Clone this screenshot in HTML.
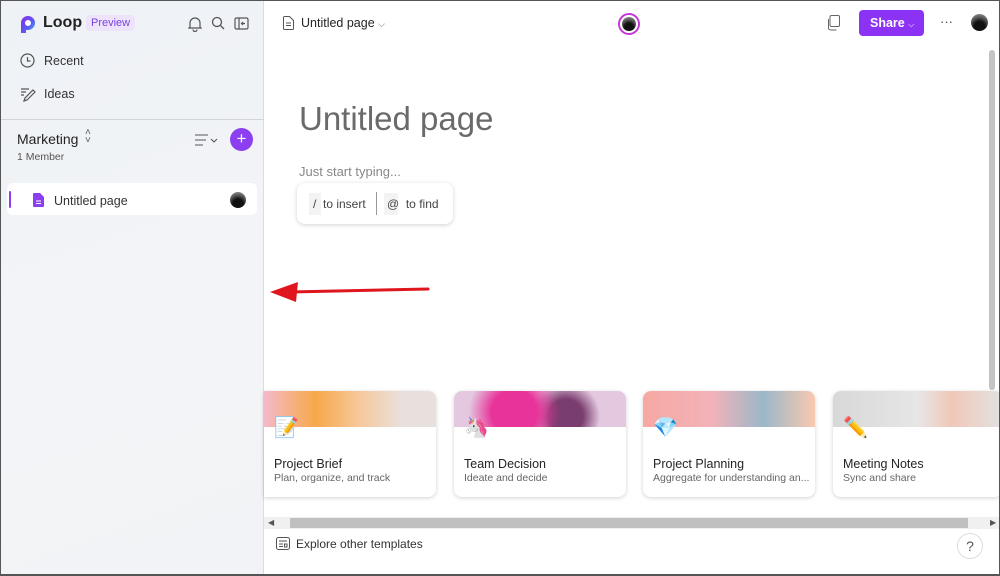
<!DOCTYPE html>
<html><head><style>
*{margin:0;padding:0;box-sizing:border-box}
body{width:1000px;height:576px;overflow:hidden;font-family:"Liberation Sans",sans-serif;background:#fff;position:relative;color:#242424}
.frame{position:absolute;inset:0;border:1px solid #555;border-bottom-width:2px;pointer-events:none;z-index:50}
.side{position:absolute;left:0;top:0;width:264px;height:576px;background:linear-gradient(160deg,#eef2f6,#f3f4f7 60%,#f2f3f6);border-right:1px solid #dcdcdc}
.a{position:absolute}
.card{position:absolute;top:391px;width:172px;height:106px;background:#fff;border-radius:8px;box-shadow:0 1px 4px rgba(0,0,0,.18);overflow:hidden}
.card .img{height:36px}
.card .t{position:absolute;left:10px;top:65px;font-size:12.5px;color:#242424}
.card .s{position:absolute;left:10px;top:81px;font-size:10.5px;color:#666;white-space:nowrap}
.card .ic{position:absolute;left:10px;top:24px;font-size:20px}
.av{border-radius:50%;background:radial-gradient(circle at 50% 75%,#111 35%,#555 60%,#aaa)}
</style></head><body>
<div class="side">
  <svg class="a" style="left:19px;top:15px" width="19" height="19" viewBox="0 0 19 19"><defs><linearGradient id="g" x1="0" y1="0" x2="1" y2="1"><stop offset="0" stop-color="#8a2be2"/><stop offset=".6" stop-color="#5b5bf5"/><stop offset="1" stop-color="#3fd4f0"/></linearGradient></defs><path d="M2 18V8a7 7 0 1 1 7 7H7v3z" fill="url(#g)"/><circle cx="9" cy="8" r="3" fill="#fff"/></svg>
  <div class="a" style="left:43px;top:14px;font-size:16px;font-weight:bold;color:#222">Loop</div>
  <div class="a" style="left:86px;top:15px;padding:2px 5px;font-size:11px;color:#7b3fe4;background:#ede4fb;border-radius:4px">Preview</div>
  <svg class="a" style="left:188px;top:16px" width="14" height="16" viewBox="0 0 14 16" fill="none" stroke="#555" stroke-width="1.2"><path d="M2 11V7a5 5 0 0110 0v4l1 1H1z M5 13.5a2 2 0 004 0"/></svg>
  <svg class="a" style="left:211px;top:16px" width="14" height="14" viewBox="0 0 14 14" fill="none" stroke="#555" stroke-width="1.3"><circle cx="6" cy="6" r="4.5"/><path d="M9.5 9.5L13 13"/></svg>
  <svg class="a" style="left:234px;top:17px" width="15" height="13" viewBox="0 0 15 13" fill="none" stroke="#555" stroke-width="1.2"><rect x="1" y="1" width="13" height="11" rx="1.5"/><path d="M5 1v11M11 6.5H7.5M9 5l-1.5 1.5L9 8"/></svg>
  <svg class="a" style="left:20px;top:53px" width="15" height="15" viewBox="0 0 15 15" fill="none" stroke="#555" stroke-width="1.2"><circle cx="7.5" cy="7.5" r="6.5"/><path d="M7.5 4v4h3"/></svg>
  <div class="a" style="left:44px;top:54px;font-size:12.5px;color:#333">Recent</div>
  <svg class="a" style="left:20px;top:86px" width="16" height="16" viewBox="0 0 16 16" fill="none" stroke="#555" stroke-width="1.2"><path d="M1 3h8M1 6h5M1 9h3M4 15l1-3 8-8 2 2-8 8z"/></svg>
  <div class="a" style="left:44px;top:87px;font-size:12.5px;color:#333">Ideas</div>
  <div class="a" style="left:0;top:119px;width:264px;height:1px;background:#d5d5d5"></div>
  <div class="a" style="left:17px;top:131px;font-size:14px;color:#222">Marketing</div>
  <div class="a" style="left:85px;top:129px;font-size:10px;color:#555;line-height:8px">˄<br>˅</div>
  <div class="a" style="left:17px;top:151px;font-size:10.5px;color:#555">1 Member</div>
  <svg class="a" style="left:195px;top:133px" width="25" height="14" viewBox="0 0 25 14" fill="none" stroke="#555" stroke-width="1.1"><path d="M0 2h13M0 7h11M0 12h8M16 6l3 3 3-3"/></svg>
  <div class="a" style="left:230px;top:128px;width:23px;height:23px;border-radius:50%;background:#8b3ff0;color:#fff;font-size:17px;text-align:center;line-height:22px">+</div>
  <div class="a" style="left:7px;top:183px;width:250px;height:32px;background:#fff;border-radius:6px"></div>
  <div class="a" style="left:9px;top:191px;width:2px;height:17px;background:#8b3ff0;border-radius:1px"></div>
  <svg class="a" style="left:33px;top:193px" width="11" height="14" viewBox="0 0 11 14"><path d="M0 1a1 1 0 011-1h6l4 4v9a1 1 0 01-1 1H1a1 1 0 01-1-1z" fill="#8b3ff0"/><path d="M3 8h5M3 10.5h5" stroke="#fff"/></svg>
  <div class="a" style="left:54px;top:194px;font-size:12.5px;color:#333">Untitled page</div>
  <div class="a av" style="left:230px;top:192px;width:16px;height:16px"></div>
</div>
<svg class="a" style="left:268px;top:278px" width="165" height="26" viewBox="0 0 165 26"><path d="M160 11L22 14" stroke="#e0161f" stroke-width="3" stroke-linecap="round"/><path d="M2 14L30 4L28 24Z" fill="#e0161f"/></svg>
<svg class="a" style="left:283px;top:16px" width="11" height="14" viewBox="0 0 11 14" fill="none" stroke="#555"><path d="M.5 1.5a1 1 0 011-1h5l4 4v8a1 1 0 01-1 1h-8a1 1 0 01-1-1z M3 7h5M3 9.5h5"/></svg>
<div class="a" style="left:301px;top:16px;font-size:12.5px;color:#242424">Untitled page <span style="font-size:9px;color:#666">⌵</span></div>
<div class="a" style="left:618px;top:13px;width:22px;height:22px;border-radius:50%;border:2px solid #c23bd4;padding:2px"><div class="av" style="width:14px;height:14px"></div></div>
<svg class="a" style="left:826px;top:15px" width="14" height="16" viewBox="0 0 14 16" fill="none" stroke="#666"><rect x="4" y=".5" width="9.5" height="11" rx="1.5"/><path d="M2.5 4v9a2 2 0 002 2h6"/></svg>
<div class="a" style="left:859px;top:10px;width:65px;height:26px;background:#8b32f5;border-radius:4px;color:#fff;font-size:12.5px;font-weight:bold;line-height:26px;padding-left:11px">Share <span style="font-size:8px;font-weight:normal">⌵</span></div>
<div class="a" style="left:940px;top:14px;font-size:13px;color:#444">···</div>
<div class="a av" style="left:971px;top:14px;width:17px;height:17px"></div>
<div class="a" style="left:989px;top:50px;width:6px;height:340px;background:#c4c4c4;border-radius:3px"></div>
<div class="a" style="left:299px;top:100px;font-size:33px;color:#6a6a6a">Untitled page</div>
<div class="a" style="left:299px;top:164px;font-size:13px;color:#888">Just start typing...</div>
<div class="a" style="left:297px;top:183px;width:156px;height:41px;background:#fff;border-radius:8px;box-shadow:0 1px 5px rgba(0,0,0,.18)"></div>
<div class="a" style="left:309px;top:193px;width:12px;height:22px;background:#f3f3f3"></div>
<div class="a" style="left:313px;top:197px;font-size:12px;color:#444">/ &nbsp;to insert</div>
<div class="a" style="left:376px;top:192px;width:1px;height:23px;background:#999"></div>
<div class="a" style="left:384px;top:193px;width:14px;height:22px;background:#f3f3f3"></div>
<div class="a" style="left:387px;top:197px;font-size:12px;color:#444">@ &nbsp;to find</div>
<div class="card" style="left:264px;border-radius:0 8px 8px 0"><div class="img" style="background:linear-gradient(90deg,#f4b9c9,#f6a94a 30%,#f7c79a 55%,#e8e0dc 80%)"></div><div class="ic">📝</div><div class="t" style="top:66px">Project Brief</div><div class="s" style="top:81px">Plan, organize, and track</div></div>
<div class="card" style="left:454px"><div class="img" style="background:radial-gradient(circle at 35% 60%,#e8349a 20%,transparent 40%),radial-gradient(circle at 65% 70%,#7a3d6f 15%,transparent 30%),#e3c8e0"></div><div class="ic">🦄</div><div class="t" style="top:66px">Team Decision</div><div class="s">Ideate and decide</div></div>
<div class="card" style="left:643px"><div class="img" style="background:linear-gradient(90deg,#f7a8a2,#f2b3b9 40%,#9bb8c8 70%,#f9c8b0)"></div><div class="ic">💎</div><div class="t" style="top:66px">Project Planning</div><div class="s">Aggregate for understanding an...</div></div>
<div class="card" style="left:833px;width:170px"><div class="img" style="background:linear-gradient(90deg,#d8d8d8,#e6e6e6 50%,#f0c8b8 70%,#e2e2e2)"></div><div class="ic">✏️</div><div class="t" style="top:66px">Meeting Notes</div><div class="s">Sync and share</div></div>
<div class="a" style="left:264px;top:517px;width:736px;height:12px;background:#f0f0f0"></div>
<div class="a" style="left:290px;top:518px;width:678px;height:10px;background:#c0c0c0"></div>
<div class="a" style="left:268px;top:518px;font-size:8px;color:#555">◀</div>
<div class="a" style="left:990px;top:518px;font-size:8px;color:#555">▶</div>
<svg class="a" style="left:276px;top:537px" width="14" height="13" viewBox="0 0 14 13" fill="none" stroke="#555"><rect x=".5" y=".5" width="13" height="12" rx="2"/><path d="M3 4h8M3 7h4M3 9.5h4M8.5 7h2.5v3h-2.5z"/></svg>
<div class="a" style="left:296px;top:537px;font-size:12px;color:#333">Explore other templates</div>
<div class="a" style="left:957px;top:533px;width:26px;height:26px;border-radius:50%;border:1px solid #ddd;text-align:center;line-height:25px;font-size:14px;color:#555">?</div>
<div class="frame"></div>
</body></html>
